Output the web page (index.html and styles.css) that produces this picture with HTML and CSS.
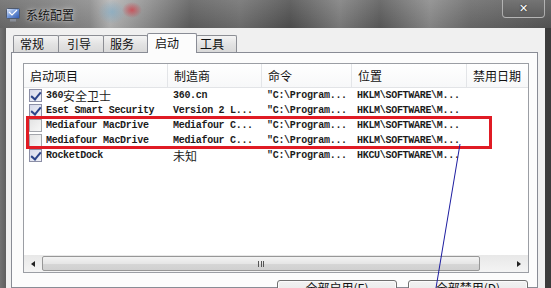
FILE: index.html
```html
<!DOCTYPE html>
<html lang="zh-CN">
	<head>
		<meta charset="UTF-8" />
		<title>系统配置</title>
		<link rel="stylesheet" href="styles.css">
	</head>
	<body>
		<div class="window">
			<div class="titlebar">
				<svg class="app-icon" width="14" height="14" viewBox="0 0 14 14">
					<defs>
						<linearGradient id="scr" x1="0" y1="0" x2="1" y2="1">
							<stop offset="0" stop-color="#e8f0ff" />
							<stop offset="0.5" stop-color="#6f95d8" />
							<stop offset="1" stop-color="#2c57b0" />
						</linearGradient>
					</defs>
					<rect x="0.5" y="0.5" width="13" height="10" rx="1" fill="url(#scr)" stroke="#4f5a6e" />
					<path d="M3 4 L6 7 L11 2" fill="none" stroke="#ffffff" stroke-width="1.2" />
					<rect x="4" y="11" width="6" height="2.5" fill="#8a8f99" />
				</svg>
				<span class="title">系统配置</span>
				<div class="close-btn">✕</div>
			</div>

			<div class="client">
				<div class="tabs">
					<div class="tab tab-1">常规</div>
					<div class="tab tab-2">引导</div>
					<div class="tab tab-3">服务</div>
					<div class="tab tab-4 active">启动</div>
					<div class="tab tab-5">工具</div>
				</div>

				<div class="tab-page">
					<div class="listview">
						<div class="lv-header lv-grid">
							<div class="lv-head">启动项目</div>
							<div class="lv-head">制造商</div>
							<div class="lv-head">命令</div>
							<div class="lv-head">位置</div>
							<div class="lv-head">禁用日期</div>
						</div>

						<div class="lv-body">
							<div class="lv-row lv-grid">
								<div class="cell first"><span class="check on"></span>360<span class="zh">安全卫士</span></div>
								<div class="cell">360.cn</div>
								<div class="cell">"C:\Program...</div>
								<div class="cell">HKLM\SOFTWARE\M...</div>
								<div class="cell"></div>
							</div>
							<div class="lv-row lv-grid">
								<div class="cell first"><span class="check on"></span>Eset Smart Security</div>
								<div class="cell">Version 2 L...</div>
								<div class="cell">"C:\Program...</div>
								<div class="cell">HKLM\SOFTWARE\M...</div>
								<div class="cell"></div>
							</div>
							<div class="lv-row lv-grid">
								<div class="cell first"><span class="check"></span>Mediafour MacDrive</div>
								<div class="cell">Mediafour C...</div>
								<div class="cell">"C:\Program...</div>
								<div class="cell">HKLM\SOFTWARE\M...</div>
								<div class="cell"></div>
							</div>
							<div class="lv-row lv-grid">
								<div class="cell first"><span class="check"></span>Mediafour MacDrive</div>
								<div class="cell">Mediafour C...</div>
								<div class="cell">"C:\Program...</div>
								<div class="cell">HKLM\SOFTWARE\M...</div>
								<div class="cell"></div>
							</div>
							<div class="lv-row lv-grid">
								<div class="cell first"><span class="check on"></span>RocketDock</div>
								<div class="cell"><span class="zh">未知</span></div>
								<div class="cell">"C:\Program...</div>
								<div class="cell">HKCU\SOFTWARE\M...</div>
								<div class="cell"></div>
							</div>
						</div>

						<div class="hscroll">
							<div class="sb-btn"><span class="arrow left"></span></div>
							<div class="sb-thumb"><span class="grip"></span></div>
							<div class="sb-track"></div>
							<div class="sb-btn"><span class="arrow right"></span></div>
						</div>
					</div>

					<div class="actions">
						<button>全部启用(E)</button>
						<button>全部禁用(D)</button>
					</div>
				</div>
			</div>

			<!-- пометки поверх скриншота -->
			<div class="mark-box"></div>
			<svg class="mark-line" width="551" height="288">
				<line x1="460" y1="144" x2="436" y2="288" stroke="#1c1ca0" stroke-width="1" />
			</svg>
		</div>
	</body>
</html>
```

FILE: styles.css
```css
* {
	box-sizing: border-box;
}
body {
	margin: 0;
	background: #3a3a3a;
	font-family: "Noto Sans CJK SC", sans-serif;
	font-size: 12px;
	color: #111;
}
.window {
	position: relative;
	width: 551px;
	height: 288px;
	overflow: hidden;
	background: linear-gradient(90deg, #727272 0, #5f5f5f 6px, #555 50%, #3b3b3b 100%);
}

/* title bar */
.titlebar {
	height: 28px;
	display: flex;
	align-items: center;
	padding-left: 6px;
	background:
		radial-gradient(ellipse 10px 8px at 132px 10px, rgba(210, 60, 70, 0.75), rgba(210, 60, 70, 0) 100%),
		radial-gradient(ellipse 14px 12px at 112px 12px, rgba(120, 170, 200, 0.6), rgba(120, 170, 200, 0) 100%),
		linear-gradient(180deg, rgba(255, 255, 255, 0.12), rgba(0, 0, 0, 0.05)),
		linear-gradient(90deg, #6a6a6a 0, #777 40px, #8a8a8a 90px, #b4b4b4 110px, #8a8a8a 150px, #5e5e5e 190px, #6f6f6f 240px, #4f4f4f 290px, #7d7d7d 340px, #5a5a5a 380px, #898989 430px, #6a6a6a 470px, #555 551px);
}
.app-icon {
	flex-shrink: 0;
	margin-top: 1px;
}
.title {
	margin-left: 6px;
	color: #151515;
	text-shadow: 0 0 6px rgba(255, 255, 255, 0.7), 0 0 2px rgba(255, 255, 255, 0.5);
}
.close-btn {
	align-self: flex-start;
	margin-left: auto;
	margin-right: 6px;
	width: 43px;
	height: 18px;
	display: flex;
	align-items: center;
	justify-content: center;
	border: 1px solid rgba(235, 235, 235, 0.55);
	border-top: none;
	border-radius: 0 0 4px 4px;
	background: linear-gradient(180deg, #747474, #5d5d5d);
	color: #fff;
	font-family: "DejaVu Sans", sans-serif;
	font-size: 11px;
	font-weight: bold;
	text-shadow: 0 0 2px #222;
}

/* client area */
.client {
	margin-left: 6px;
	width: 539px;
	height: 260px;
	background: #f0f0f0;
	padding-top: 5px;
}
.tabs {
	display: flex;
	align-items: flex-end;
	padding-left: 7px;
	height: 19px;
}
.tab {
	height: 17px;
	line-height: 15px;
	padding-left: 6px;
	border: 1px solid #8c8e94;
	border-bottom: none;
	border-radius: 2px 2px 0 0;
	background: linear-gradient(180deg, #f4f4f4, #e3e3e3 50%, #d9d9d9 100%);
	margin-right: -1px;
	white-space: nowrap;
}
.tab-1 {
	width: 46px;
}
.tab-2 {
	width: 46px;
	padding-left: 8px;
}
.tab-3 {
	width: 45px;
}
.tab-4 {
	width: 50px;
}
.tab-5 {
	width: 41px;
	padding-left: 3px;
}
.tab.active {
	position: relative;
	z-index: 1;
	height: 20px;
	line-height: 17px;
	margin-bottom: -1px;
	padding-left: 7px;
	background: #fcfcfc;
	border-color: #898c95;
}
.tab-page {
	margin-left: 5px;
	width: 527px;
	height: 236px;
	border: 1px solid #898c95;
	background: #fcfcfc;
	padding: 10px 8px 0 11px;
}

/* list view */
.listview {
	height: 210px;
	border: 1px solid #9b9ea4;
	background: #fff;
	display: flex;
	flex-direction: column;
}
.lv-grid {
	display: grid;
	grid-template-columns: 144px 94px 90px 115px 1fr;
}
.lv-header {
	height: 24px;
	border-bottom: 1px solid #e2e4e7;
	background: linear-gradient(180deg, #ffffff, #f7f8f9);
}
.lv-head {
	padding-left: 6px;
	line-height: 23px;
	border-right: 1px solid #e3e5e8;
	white-space: nowrap;
	overflow: hidden;
}
.lv-head:last-child {
	border-right: none;
}
.lv-body {
	flex: 1;
}
.lv-row {
	height: 15px;
}
.cell {
	padding-left: 5px;
	display: flex;
	align-items: center;
	white-space: nowrap;
	overflow: hidden;
	font-family: "Liberation Mono", "Noto Sans CJK SC", monospace;
	font-size: 10px;
	font-weight: bold;
	letter-spacing: -0.3px;
	color: #1c1c1c;
}
.zh {
	font-family: "Noto Sans CJK SC", sans-serif;
	font-size: 12px;
	font-weight: normal;
	letter-spacing: 0;
	line-height: 14px;
}
.check {
	position: relative;
	flex-shrink: 0;
	width: 13px;
	height: 13px;
	margin-right: 4px;
	border: 1px solid #a3a5ab;
	background: linear-gradient(135deg, #e4e4e4, #f7f7f7);
}
.check.on {
	border-color: #8c8fa6;
	background: linear-gradient(135deg, #d5d9ea, #f1f2f8);
}
.check.on::after {
	content: "";
	position: absolute;
	left: 3px;
	top: 0px;
	width: 4px;
	height: 8px;
	border-right: 2px solid #2b448a;
	border-bottom: 2px solid #2b448a;
	transform: rotate(40deg);
}

/* scrollbar */
.hscroll {
	height: 17px;
	display: flex;
	background: linear-gradient(180deg, #e8e8e8, #f4f4f4);
}
.sb-btn {
	width: 18px;
	display: flex;
	align-items: center;
	justify-content: center;
}
.arrow {
	width: 0;
	height: 0;
	border-top: 3.5px solid transparent;
	border-bottom: 3.5px solid transparent;
}
.arrow.left {
	border-right: 4px solid #222;
}
.arrow.right {
	border-left: 4px solid #222;
}
.sb-thumb {
	width: 438px;
	margin: 1px 0;
	border: 1px solid #979797;
	border-radius: 2px;
	background: linear-gradient(180deg, #f3f3f3, #e6e6e6 50%, #d6d6d6 51%, #d0d0d0);
	display: flex;
	align-items: center;
	justify-content: center;
}
.grip {
	width: 6px;
	height: 6px;
	border-left: 1px solid #555;
	border-right: 1px solid #555;
	position: relative;
}
.grip::after {
	content: "";
	position: absolute;
	left: 1.5px;
	top: 0;
	height: 6px;
	border-left: 1px solid #555;
}
.sb-track {
	flex: 1;
}

/* buttons */
.actions {
	display: flex;
	justify-content: flex-end;
	gap: 11px;
	padding-right: 1px;
	margin-top: 7px;
}
button {
	width: 120px;
	height: 22px;
	padding: 0 0 6px;
	font-family: "Noto Sans CJK SC", sans-serif;
	font-size: 12px;
	line-height: 14px;
	color: #111;
	border: 1px solid #707070;
	border-radius: 3px;
	background: linear-gradient(180deg, #f2f2f2, #ebebeb 45%, #dddddd 50%, #cfcfcf);
	box-shadow: inset 0 0 0 1px #fbfbfb;
}

/* annotations */
.mark-box {
	position: absolute;
	left: 26px;
	top: 116px;
	width: 466px;
	height: 33px;
	border: 3px solid #e01b24;
}
.mark-line {
	position: absolute;
	left: 0;
	top: 0;
}
```
